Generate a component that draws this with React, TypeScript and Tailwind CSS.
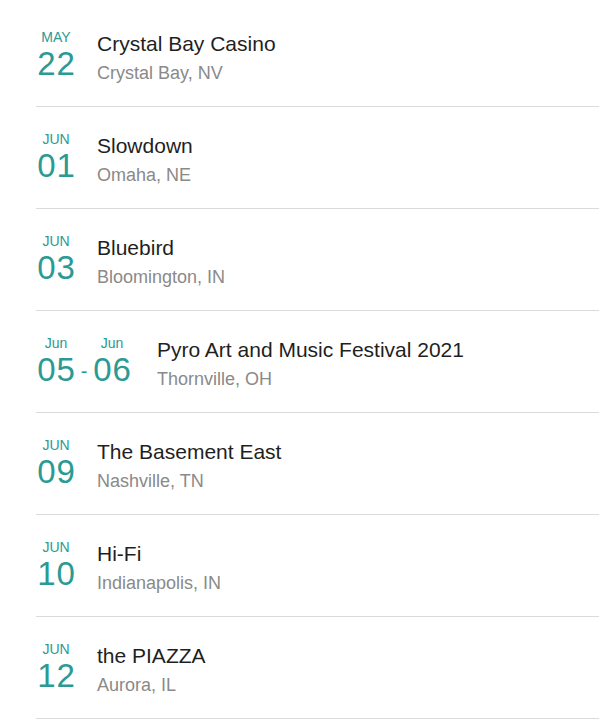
type Show = {
  month: string;
  day: string;
  endMonth?: string;
  endDay?: string;
  venue: string;
  place: string;
};

const shows: Show[] = [
  { month: "MAY", day: "22", venue: "Crystal Bay Casino", place: "Crystal Bay, NV" },
  { month: "JUN", day: "01", venue: "Slowdown", place: "Omaha, NE" },
  { month: "JUN", day: "03", venue: "Bluebird", place: "Bloomington, IN" },
  {
    month: "Jun",
    day: "05",
    endMonth: "Jun",
    endDay: "06",
    venue: "Pyro Art and Music Festival 2021",
    place: "Thornville, OH",
  },
  { month: "JUN", day: "09", venue: "The Basement East", place: "Nashville, TN" },
  { month: "JUN", day: "10", venue: "Hi-Fi", place: "Indianapolis, IN" },
  { month: "JUN", day: "12", venue: "the PIAZZA", place: "Aurora, IL" },
];

function DateBox({ month, day }: { month: string; day: string }) {
  return (
    <div className="flex w-[40px] flex-col items-center text-[#2a9a93]">
      <span className="text-[14px] leading-4">{month}</span>
      <span className="mt-[3px] pl-[1px] text-[33px] leading-8 tracking-[1px]">{day}</span>
    </div>
  );
}

export default function App() {
  return (
    <div className="min-h-screen bg-white pt-[5px] font-['Liberation_Sans',Arial,sans-serif]">
      <ul className="ml-[36px]">
        {shows.map((s) => (
          <li
            key={s.venue}
            className="flex h-[102px] items-start gap-[21px] border-b border-[#dadada] pt-[24px]"
          >
            {s.endDay ? (
              <div className="mr-[4px] flex items-start">
                <DateBox month={s.month} day={s.day} />
                <span className="mt-[24px] w-[16px] text-center text-[20px] leading-6 text-[#2a9a93]">
                  -
                </span>
                <DateBox month={s.endMonth!} day={s.endDay} />
              </div>
            ) : (
              <DateBox month={s.month} day={s.day} />
            )}
            <div className="flex flex-col pt-[3px]">
              <span className="text-[21px] leading-6 text-[#1f1f1f]">{s.venue}</span>
              <span className="mt-[5px] text-[18px] leading-6 text-[#8a8a8a]">{s.place}</span>
            </div>
          </li>
        ))}
      </ul>
    </div>
  );
}
